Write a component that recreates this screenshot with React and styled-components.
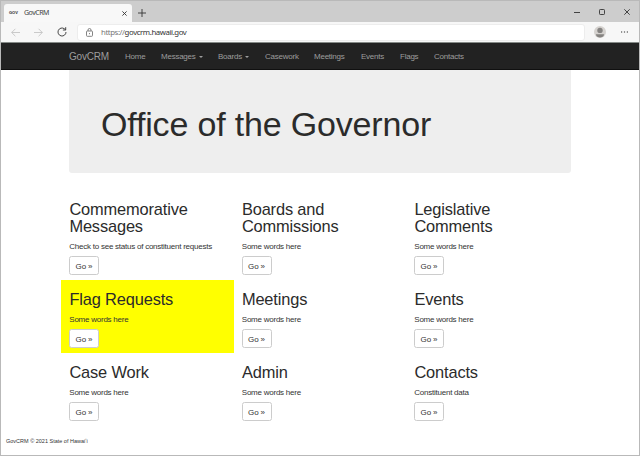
import React from "react";
import styled, { createGlobalStyle } from "styled-components";

const Global = createGlobalStyle`
  *, *::before, *::after { box-sizing: border-box; }
  body { margin: 0; font-family: "Liberation Sans", Arial, sans-serif; color: #333; background: #fff; }
  h1, h2, p { margin: 0; font-weight: 400; }
`;

const Window = styled.div`
  width: 640px;
  height: 456px;
  display: flex;
  flex-direction: column;
  overflow: hidden;
  border: 1px solid #b9b9b9;
  background: #fff;
`;

const TabStrip = styled.header`
  height: 21px;
  flex: none;
  display: flex;
  align-items: flex-end;
  padding-left: 3px;
  background: #cdcdcd;
  font-family: "Noto Sans", "Open Sans", sans-serif;
`;

const Tab = styled.div`
  width: 128px;
  height: 18px;
  display: flex;
  align-items: center;
  padding: 0 5px;
  border-radius: 3px 3px 0 0;
  background: #f8f8f8;
`;

const Favicon = styled.span`
  width: 15px;
  color: #222;
  font: 700 4px/8px "Liberation Sans", sans-serif;
`;

const TabTitle = styled.span`
  flex: 1;
  color: #444;
  font-size: 7px;
  line-height: 10px;
  letter-spacing: -0.5px;
`;

const Glyph = styled.svg`
  display: block;
  flex: none;
  width: ${(p) => p.$w}px;
  height: ${(p) => p.$h || p.$w}px;
  fill: none;
  stroke: ${(p) => p.$color || "#333"};
  stroke-width: ${(p) => p.$stroke || 0.9};
`;

const NewTab = styled.div`
  height: 18px;
  display: flex;
  align-items: center;
  padding-left: 6px;
`;

const WindowControls = styled.div`
  height: 21px;
  display: flex;
  align-items: center;
  gap: 19px;
  margin-left: auto;
  padding-right: 9px;
`;

const Toolbar = styled.div`
  height: 20px;
  flex: none;
  display: flex;
  align-items: center;
  padding: 0 11px 0 10px;
  background: #f7f7f7;
`;

const History = styled.div`
  width: 66px;
  display: flex;
  align-items: center;
  gap: 14px;
`;

const AddressBar = styled.div`
  width: 508px;
  height: 17px;
  display: flex;
  align-items: center;
  padding-left: 8px;
  border: 1px solid #ededed;
  border-radius: 3px;
  background: #fff;
  color: #333;
  font: 7.8px/12px "Noto Sans", sans-serif;
`;

const Url = styled.span`
  margin-left: 8px;
  letter-spacing: -0.41px;
`;

const Scheme = styled.span`
  color: #777;
`;

const Profile = styled.div`
  display: flex;
  align-items: center;
  gap: 15px;
  margin-left: auto;
`;

const Navbar = styled.nav`
  height: 28px;
  flex: none;
  display: flex;
  align-items: center;
  padding: 1px 0 0 68px;
  border-top: 1px solid #858a87;
  border-bottom: 1px solid #101010;
  background: #222;
  color: #9d9d9d;
`;

const Brand = styled.a`
  width: 56px;
  font-size: 10px;
  line-height: 14px;
  letter-spacing: -0.23px;
`;

const NavItem = styled.a`
  width: ${(p) => p.$width}px;
  display: flex;
  align-items: center;
  gap: 3px;
  font-size: 8px;
  line-height: 12px;
  letter-spacing: -0.24px;
`;

const Caret = styled.span`
  border: 2px solid transparent;
  border-top-color: #9d9d9d;
  border-bottom: 0;
`;

const Container = styled.main`
  width: 518px;
  margin-left: 60px;
`;

const Jumbotron = styled.section`
  width: 502px;
  height: 103px;
  margin: 0 8px 16px;
  padding: 33px 32px;
  border-radius: 0 0 3px 3px;
  background: #eee;
`;

const Title = styled.h1`
  color: #2b2b2b;
  font-size: 34px;
  line-height: 42px;
  letter-spacing: -0.17px;
`;

const Grid = styled.div`
  display: grid;
  grid-template-columns: repeat(3, 172.5px);
  grid-template-rows: 91px 73px 73px;
`;

const Card = styled.article`
  display: flex;
  flex-direction: column;
  justify-content: flex-end;
  padding: 0 8px 5px;
  background: ${(p) => (p.$highlight ? "#ff0" : "transparent")};
`;

const Heading = styled.h2`
  width: 130px;
  padding: 0 0 ${(p) => (p.$tall ? 0.5 : 0)}px 0.4px;
  color: #2b2b2b;
  font-size: 16.4px;
  line-height: ${(p) => (p.$tall ? 17 : 18)}px;
  letter-spacing: -0.15px;
`;

const Text = styled.p`
  margin: 7px 0 4px;
  padding-left: 0.3px;
  font-size: 8px;
  line-height: 10px;
  letter-spacing: -0.24px;
  white-space: nowrap;
`;

const Button = styled.button`
  width: 30px;
  height: 19px;
  display: block;
  padding: 2px 0 0;
  border: 1px solid #ccc;
  border-radius: 2.5px;
  background: #fff;
  color: #333;
  font: 8px/15px "Liberation Sans", sans-serif;
  letter-spacing: -0.1px;
`;

const Footer = styled.footer`
  padding: 11px 0 0 5px;
  font-size: 5.5px;
  line-height: 8px;
`;

const links = [
  { label: "Home", width: 36 },
  { label: "Messages", width: 57, menu: true },
  { label: "Boards", width: 47, menu: true },
  { label: "Casework", width: 49 },
  { label: "Meetings", width: 47 },
  { label: "Events", width: 39 },
  { label: "Flags", width: 34 },
  { label: "Contacts", width: 40 },
];

const cards = [
  { title: "Commemorative Messages", text: "Check to see status of constituent requests" },
  { title: "Boards and Commissions" },
  { title: "Legislative Comments" },
  { title: "Flag Requests", highlight: true },
  { title: "Meetings" },
  { title: "Events" },
  { title: "Case Work" },
  { title: "Admin" },
  { title: "Contacts", text: "Constituent data" },
];

export default function App() {
  return (
    <>
      <Global />
      <Window>
        <TabStrip>
          <Tab>
            <Favicon>GOV</Favicon>
            <TabTitle>GovCRM</TabTitle>
            <Glyph $w={5} viewBox="0 0 5 5"><path d="M.4.4l4.2 4.2M4.6.4L.4 4.6" /></Glyph>
          </Tab>
          <NewTab>
            <Glyph $w={8} viewBox="0 0 8 8"><path d="M4 0v8M0 4h8" /></Glyph>
          </NewTab>
          <WindowControls>
            <Glyph $w={6} viewBox="0 0 6 6"><path d="M0 3.5h6" /></Glyph>
            <Glyph $w={6} viewBox="0 0 6 6"><rect x=".5" y=".5" width="5" height="5" rx=".8" /></Glyph>
            <Glyph $w={6} viewBox="0 0 6 6"><path d="M.3.3l5.4 5.4M5.7.3L.3 5.7" /></Glyph>
          </WindowControls>
        </TabStrip>
        <Toolbar>
          <History>
            <Glyph $w={9} $color="#c4c4c4" viewBox="0 0 9 9"><path d="M9 4.5H.7M4.4.8L.7 4.5l3.7 3.7" /></Glyph>
            <Glyph $w={9} $color="#c4c4c4" viewBox="0 0 9 9"><path d="M0 4.5h8.3M4.6.8l3.7 3.7-3.7 3.7" /></Glyph>
            <Glyph $w={10} viewBox="0 0 10 10"><path d="M9 5a4 4 0 1 1-1.6-3.2L8.5 2.8M8.7.2v2.8H5.9" /></Glyph>
          </History>
          <AddressBar>
            <Glyph $w={7} $h={9} $color="#777" viewBox="0 0 7 9">
              <rect x=".5" y="3" width="6" height="5.3" rx=".8" />
              <path d="M2 3V2a1.5 1.5 0 0 1 3 0v1M3.5 5v1.2" />
            </Glyph>
            <Url><Scheme>https://</Scheme>govcrm.hawaii.gov</Url>
          </AddressBar>
          <Profile>
            <Glyph $w={12} viewBox="0 0 12 12" $color="none">
              <circle cx="6" cy="6" r="6" fill="#d5d2cf" />
              <circle cx="6" cy="4.4" r="2.7" fill="#858381" />
              <path d="M1.8 8.2h8.4C9.8 10.4 8 11.4 6 11.4S2.2 10.4 1.8 8.2z" fill="#858381" />
            </Glyph>
            <Glyph $w={7} $h={2} viewBox="0 0 7 2" $color="none">
              <path d="M0 .4h1.2v1.2H0zM2.9.4h1.2v1.2H2.9zM5.8.4H7v1.2H5.8z" fill="#333" />
            </Glyph>
          </Profile>
        </Toolbar>
        <Navbar>
          <Brand>GovCRM</Brand>
          {links.map((l) => (
            <NavItem key={l.label} $width={l.width}>{l.label}{l.menu && <Caret />}</NavItem>
          ))}
        </Navbar>
        <Container>
          <Jumbotron><Title>Office of the Governor</Title></Jumbotron>
          <Grid>
            {cards.map((c, i) => (
              <Card key={c.title} $highlight={c.highlight}>
                <Heading $tall={i < 3}>{c.title}</Heading>
                <Text>{c.text || "Some words here"}</Text>
                <Button>Go »</Button>
              </Card>
            ))}
          </Grid>
        </Container>
        <Footer>GovCRM © 2021 State of Hawaiʻi</Footer>
      </Window>
    </>
  );
}
